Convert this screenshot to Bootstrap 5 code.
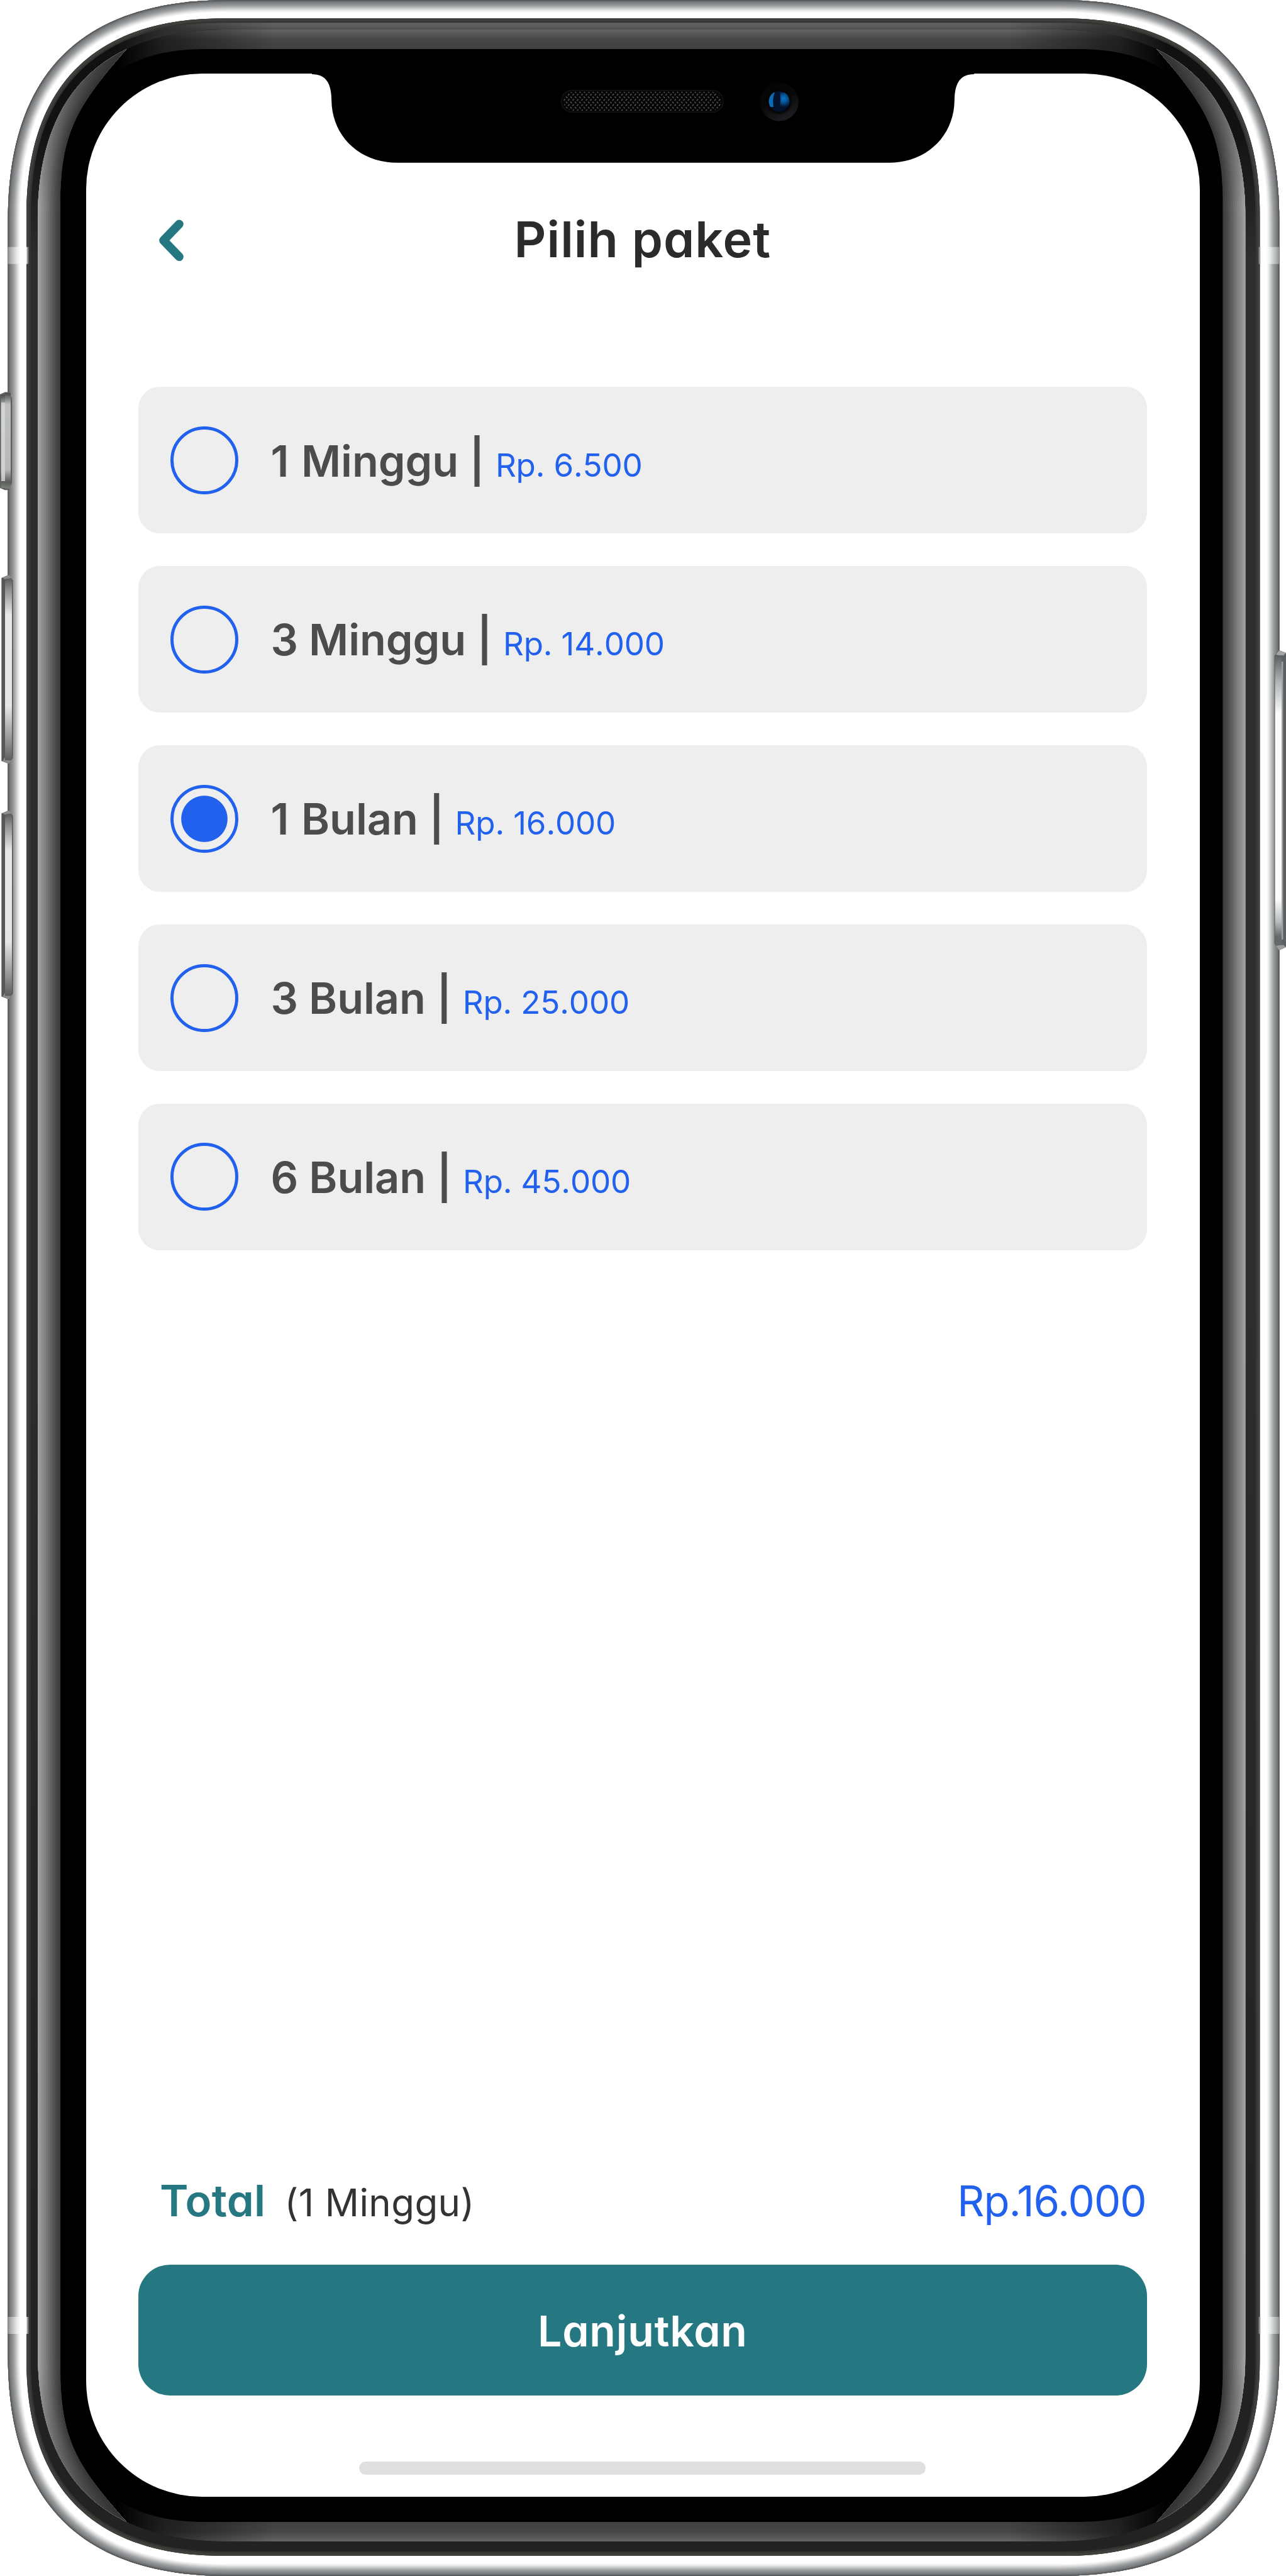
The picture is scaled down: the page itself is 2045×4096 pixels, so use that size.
<!DOCTYPE html>
<html lang="id">
<head>
<meta charset="utf-8">
<meta name="viewport" content="width=device-width, initial-scale=1">
<title>Pilih paket</title>
<link href="https://cdn.jsdelivr.net/npm/bootstrap@5.3.0/dist/css/bootstrap.min.css" rel="stylesheet">
<style>
  :root { --teal: #257881; --blue: #2161ee; --ink: #2b2b2b; }
  html, body { margin: 0; background: #fff; }
  body { width: 2045px; height: 4096px; overflow: hidden; font-family: Inter, "Open Sans", sans-serif; line-height: 1.2; }
  .phone { width: 2045px; height: 4096px; padding: 117px 136.6px 126.3px 136.6px; }
  .phone-art { inset: 0; width: 2045px; height: 4096px; }
  .phone-screen { border-radius: 184px; padding: 205px 84.7px 0 83.4px; }
  .geo { font-feature-settings: "cv11" 1, "ss03" 1; }
  .topbar { display: grid; grid-template-columns: 1fr auto 1fr; height: 120px; }
  .back-btn { width: 60px; height: 90px; margin-left: 25px; color: var(--teal); }
  .page-title { font-size: 79px; font-weight: 600; color: var(--ink); letter-spacing: 1px; line-height: 1; padding-bottom: 3px; }
  .plans { margin-top: 173.4px; gap: 51.9px; }
  .plan { height: 233px; border-radius: 34px; background: #eee; padding-left: 51.5px; gap: 51px; }
  .plan-radio { width: 108px; height: 108px; border: 5px solid var(--blue); border-radius: 50%; appearance: none; margin: 0; flex: none; background: transparent; }
  .plan-radio:checked { background: radial-gradient(circle, var(--blue) 36.3px, transparent 37.3px); }
  .plan-label { font-size: 68.5px; font-weight: 600; color: #4b4c4c; padding-top: 3.6px; white-space: pre; letter-spacing: -0.1px; font-kerning: none; }
  .plan-one { letter-spacing: 2.4px; }
  .plan-price { font-size: 51.2px; font-weight: 400; color: var(--blue); letter-spacing: -0.2px; }
  .summary { height: 96px; padding: 0 1px 0 34px; margin-bottom: 47px; }
  .sum-name { font-size: 69px; font-weight: 600; color: var(--teal); letter-spacing: .3px; }
  .sum-plan { font-size: 60px; font-weight: 400; color: #333; margin-left: 30px; letter-spacing: .4px; }
  .sum-price { font-size: 67px; font-weight: 400; color: var(--blue); letter-spacing: -0.9px; }
  .btn-next { height: 208px; border-radius: 50px; background: var(--teal); color: #fff; font-size: 68px; font-weight: 600; border: 0; letter-spacing: .7px; padding-top: 2px !important; }
  .home-bar { width: 901px; height: 21px; border-radius: 11px; background: #e0e0e0; margin: 105px auto 35px; }
</style>
</head>
<body>
<div class="phone position-relative">
  <svg class="phone-art position-absolute" viewBox="0 0 2045 4096" aria-hidden="true">
    <defs>
      <path id="shell" d="M12.6 350C12.6 117 129.6 0 362.6 0H1684.3C1917.3 0 2034.3 117 2034.3 350V3746C2034.3 3979 1917.3 4096 1684.3 4096H362.6C129.6 4096 12.6 3979 12.6 3746Z"/>
      <path id="body" d="M42 341.3C42 137.3 150 29.3 354 29.3H1691.4C1895.4 29.3 2003.4 137.3 2003.4 341.3V3752C2003.4 3956 1895.4 4064 1691.4 4064H354C150 4064 42 3956 42 3752Z"/>
      <path id="glass" d="M60 347C60 151 164 47 360 47H1680.5C1876.5 47 1980.5 151 1980.5 347V3741C1980.5 3937 1876.5 4041 1680.5 4041H360C164 4041 60 3937 60 3741Z"/>
      <clipPath id="cShell"><use href="#shell"/></clipPath>
      <clipPath id="cBody"><use href="#body"/></clipPath>
      <clipPath id="cGlass"><use href="#glass"/></clipPath>
      <clipPath id="cSide"><path d="M40 20H203V76C125 165 96.1 210 96.1 320V3768C96.1 3883 125 3923 203 4012V4070H40Z"/></clipPath>
      <clipPath id="cTop"><path d="M203 40V76L178 120C215 92 260 78 330 78H1710.5C1780.5 78 1825.5 92 1862.5 120L1837.5 76V40Z"/></clipPath>
      <linearGradient id="gBody" gradientUnits="userSpaceOnUse" x1="0" y1="0" x2="0" y2="4096">
        <stop offset="0" stop-color="#101010"/><stop offset=".05" stop-color="#121212"/><stop offset=".1" stop-color="#2d2d2d"/><stop offset=".5" stop-color="#2d2d2d"/><stop offset=".88" stop-color="#222"/><stop offset="1" stop-color="#222"/>
      </linearGradient>
      <linearGradient id="gSheen" gradientUnits="userSpaceOnUse" x1="0" y1="33" x2="0" y2="47">
        <stop offset="0" stop-color="#6a6a6a"/><stop offset="1" stop-color="#505050"/>
      </linearGradient>
      <linearGradient id="gFade" gradientUnits="userSpaceOnUse" x1="185" y1="0" x2="1855.5" y2="0">
        <stop offset="0" stop-color="#000"/><stop offset=".045" stop-color="#777"/><stop offset=".15" stop-color="#fff"/><stop offset=".85" stop-color="#fff"/><stop offset=".955" stop-color="#777"/><stop offset="1" stop-color="#000"/>
      </linearGradient>
      <mask id="mFade" maskUnits="userSpaceOnUse" x="0" y="0" width="2045" height="4096"><rect width="2045" height="4096" fill="url(#gFade)"/></mask>
      <linearGradient id="gTop" gradientUnits="userSpaceOnUse" x1="0" y1="47" x2="0" y2="78">
        <stop offset="0" stop-color="#646464"/><stop offset=".5" stop-color="#464646"/><stop offset="1" stop-color="#404040"/>
      </linearGradient>
      <linearGradient id="gDim" gradientUnits="userSpaceOnUse" x1="0" y1="0" x2="0" y2="4088">
        <stop offset=".018" stop-opacity=".72"/><stop offset=".04" stop-opacity=".4"/><stop offset=".08" stop-opacity="0"/><stop offset=".92" stop-opacity="0"/><stop offset=".96" stop-opacity=".4"/><stop offset=".982" stop-opacity=".72"/>
      </linearGradient>
      <linearGradient id="gBand" x1="0" x2="1" y1="0" y2="0">
        <stop offset="0" stop-color="#8f918f"/><stop offset=".15" stop-color="#b4b6b4"/><stop offset=".45" stop-color="#eceef1"/><stop offset=".6" stop-color="#fff"/><stop offset=".86" stop-color="#fff"/><stop offset=".9" stop-color="#a8a8a8"/><stop offset="1" stop-color="#3a3a38"/>
      </linearGradient>
      <linearGradient id="gKey" x1="0" x2="0" y1="0" y2="1">
        <stop offset="0" stop-color="#5c5e60"/><stop offset=".06" stop-color="#8d8f91"/><stop offset=".2" stop-color="#e8e8e8"/><stop offset=".7" stop-color="#e6e6e6"/><stop offset=".9" stop-color="#8d8f91"/><stop offset="1" stop-color="#5c5e60"/>
      </linearGradient>
      <linearGradient id="gPower" x1="0" x2="0" y1="0" y2="1">
        <stop offset="0" stop-color="#5c5e60"/><stop offset=".09" stop-color="#b0b2b4"/><stop offset=".2" stop-color="#fafafa"/><stop offset=".84" stop-color="#fdfdfd"/><stop offset=".92" stop-color="#b8babc"/><stop offset=".97" stop-color="#666869"/><stop offset="1" stop-color="#666869"/>
      </linearGradient>
      <linearGradient id="gMute" x1="0" x2="0" y1="0" y2="1">
        <stop offset="0" stop-color="#4a4c4a"/><stop offset=".12" stop-color="#bcbec0"/><stop offset=".8" stop-color="#b6b8ba"/><stop offset=".93" stop-color="#5a5c5a"/><stop offset="1" stop-color="#7c7e7c"/>
      </linearGradient>
      <g id="sideStrip">
        <g clip-path="url(#cSide)"><g clip-path="url(#cGlass)" fill="none">
          <use href="#glass" fill="#3c3c3c"/>
          <use href="#glass" stroke="#424242" stroke-width="68"/>
          <use href="#glass" stroke="#484848" stroke-width="62"/>
          <use href="#glass" stroke="#505050" stroke-width="56"/>
          <use href="#glass" stroke="#5a5a5a" stroke-width="50"/>
          <use href="#glass" stroke="#646464" stroke-width="44"/>
          <use href="#glass" stroke="#6e6e6e" stroke-width="38"/>
          <use href="#glass" stroke="#787878" stroke-width="32"/>
          <use href="#glass" stroke="#828282" stroke-width="26"/>
          <use href="#glass" stroke="#8a8a8a" stroke-width="20"/>
          <use href="#glass" stroke="#929292" stroke-width="14"/>
          <use href="#glass" stroke="#9a9a9a" stroke-width="9"/>
          <use href="#glass" stroke="#a2a2a2" stroke-width="4"/>
          <rect x="40" width="180" height="4096" fill="url(#gDim)"/>
        </g></g>
      </g>
      <g id="topStrip" mask="url(#mFade)">
        <g clip-path="url(#cTop)"><g clip-path="url(#cGlass)"><rect x="150" y="40" width="1740" height="90" fill="url(#gTop)"/></g></g>
      </g>
      <pattern id="mesh" width="7.05" height="8.3" patternUnits="userSpaceOnUse" x="892" y="144">
        <path d="M1 1.2L3 3.6M6.4 5.3L4.4 7.8" stroke="#747474" stroke-width="1.2" fill="none"/>
      </pattern>
      <linearGradient id="gRing" x1="0" y1="0" x2=".5" y2="1"><stop offset="0" stop-color="#030304"/><stop offset=".55" stop-color="#08080a"/><stop offset="1" stop-color="#1b1c1f"/></linearGradient>
      <radialGradient id="gHole" cx="1239" cy="161.5" r="22" gradientUnits="userSpaceOnUse"><stop offset=".7" stop-color="#000"/><stop offset="1" stop-color="#000" stop-opacity="0"/></radialGradient>
      <radialGradient id="gSpot" cx="1246" cy="157" r="13" gradientUnits="userSpaceOnUse"><stop offset="0" stop-color="#0a76cc"/><stop offset=".5" stop-color="#07508f"/><stop offset="1" stop-color="#021430"/></radialGradient>
      <clipPath id="cLens"><circle cx="1239" cy="161.2" r="16.5"/></clipPath>
    </defs>

    <!-- steel shell: nested strokes shade the rim from dark to bright -->
    <g clip-path="url(#cShell)">
      <use href="#shell" fill="#fff"/>
      <g fill="none">
        <use href="#shell" stroke="#f4f4f5" stroke-width="38"/>
        <use href="#shell" stroke="#e8e9e9" stroke-width="35"/>
        <use href="#shell" stroke="#dadbdb" stroke-width="32"/>
        <use href="#shell" stroke="#cacbcc" stroke-width="29"/>
        <use href="#shell" stroke="#babbbd" stroke-width="26"/>
        <use href="#shell" stroke="#abadae" stroke-width="23"/>
        <use href="#shell" stroke="#9c9ea0" stroke-width="20"/>
        <use href="#shell" stroke="#929496" stroke-width="17"/>
        <use href="#shell" stroke="#898b8d" stroke-width="14"/>
        <use href="#shell" stroke="#808284" stroke-width="11"/>
        <use href="#shell" stroke="#76787a" stroke-width="8"/>
        <use href="#shell" stroke="#67696b" stroke-width="5"/>
        <use href="#shell" stroke="#565859" stroke-width="2.4"/>
      </g>
    </g>
    <g clip-path="url(#cBody)">
      <use href="#body" fill="url(#gBody)"/>
      <g mask="url(#mFade)"><rect x="185" y="29" width="1670" height="50" fill="url(#gSheen)"/></g>
      <use href="#body" fill="none" stroke="#343432" stroke-width="14"/>
      <use href="#body" fill="none" stroke="#403f3c" stroke-width="8.5"/>
    </g>
    <use href="#glass" fill="#000"/>
    <use href="#sideStrip"/>
    <use href="#sideStrip" transform="matrix(-1 0 0 1 2040.5 0)"/>
    <use href="#topStrip"/>
    <use href="#topStrip" transform="matrix(1 0 0 -1 0 4088)"/>

    <!-- antenna bands -->
    <rect x="12.6" y="392.7" width="34" height="27" fill="url(#gBand)"/>
    <rect x="12.6" y="3684" width="34" height="27" fill="url(#gBand)"/>
    <g transform="matrix(-1 0 0 1 2046.9 0)">
      <rect x="12.6" y="392.7" width="34" height="27" fill="url(#gBand)"/>
      <rect x="12.6" y="3684" width="34" height="27" fill="url(#gBand)"/>
    </g>

    <!-- mute switch, volume keys, power key -->
    <path d="M0 627L8 623.6H14L19 634V768L14 779.3H8L0 776Z" fill="#5c5e5c"/>
    <path d="M1.5 628H8V776H1.5Z" fill="url(#gMute)"/><path d="M2 640H8V765H2Z" fill="#d8d8d8" opacity=".8"/>
    <path d="M8 625H17V777H8Z" fill="url(#gMute)"/>
    <g id="volume">
      <path d="M2.3 919L14 914L20.5 923V1205L14 1214.5L2.3 1210Z" fill="#555758"/>
      <path d="M4 918.5L14 914L19 919L8 921Z" fill="#8b8d8b"/>
      <path d="M4 1210L8 1204L18 1209L14 1214.5Z" fill="#8b8d8b"/>
      <path d="M8 925L10 920H18L19 926V1204L17 1209H8Z" fill="url(#gKey)"/>
    </g>
    <use href="#volume" y="374.5"/>
    <path d="M2034 1034L2045 1038V1506L2034 1511L2026.5 1500V1043Z" fill="#5d5f60"/>
    <path d="M2034 1034L2045 1038L2040 1043L2029 1041Z" fill="#a2a4a5"/>
    <path d="M2034 1511L2045 1506L2040 1502L2029 1504Z" fill="#9a9c9d"/>
    <path d="M2027.6 1042H2040L2038 1050V1495L2040 1503H2027.6Z" fill="url(#gPower)"/>
    <rect x="2038" y="1052" width="2.4" height="442" fill="#9fa1a2"/>
  </svg>

  <main class="phone-screen position-relative bg-white w-100 h-100 d-flex flex-column">
    <header class="topbar align-items-center">
      <a href="#" class="back-btn d-block" aria-label="Kembali">
        <svg width="60" height="90" viewBox="0 0 60 90" fill="none" stroke="currentColor" stroke-width="13.6" stroke-linecap="round" stroke-linejoin="round"><path d="M40 19.3L15 45.3L40 71.3"/></svg>
      </a>
      <h1 class="page-title geo m-0">Pilih paket</h1>
    </header>

    <section class="plans d-flex flex-column">
      <label class="plan d-flex align-items-center"><input class="plan-radio" type="radio" name="paket"><span class="plan-label"><span class="plan-one">1</span> Minggu | <span class="plan-price">Rp. 6.500</span></span></label>
      <label class="plan d-flex align-items-center"><input class="plan-radio" type="radio" name="paket"><span class="plan-label">3 Minggu | <span class="plan-price">Rp. 14.000</span></span></label>
      <label class="plan d-flex align-items-center"><input class="plan-radio" type="radio" name="paket" checked><span class="plan-label"><span class="plan-one">1</span> Bulan | <span class="plan-price">Rp. 16.000</span></span></label>
      <label class="plan d-flex align-items-center"><input class="plan-radio" type="radio" name="paket"><span class="plan-label">3 Bulan | <span class="plan-price">Rp. 25.000</span></span></label>
      <label class="plan d-flex align-items-center"><input class="plan-radio" type="radio" name="paket"><span class="plan-label">6 Bulan | <span class="plan-price">Rp. 45.000</span></span></label>
    </section>

    <footer class="mt-auto">
      <div class="summary geo d-flex align-items-baseline">
        <span class="sum-name">Total</span>
        <span class="sum-plan">(1 Minggu)</span>
        <span class="sum-price ms-auto">Rp.16.000</span>
      </div>
      <button type="button" class="btn btn-next geo w-100 p-0">Lanjutkan</button>
      <div class="home-bar"></div>
    </footer>
  </main>

  <!-- notch with speaker and camera -->
  <svg class="phone-art position-absolute pe-none" viewBox="0 0 2045 4096" aria-hidden="true">
    <path d="M496 116V118C518 118 527 132 527.2 160C528 215 570 258.8 632 258.8H1413C1475 258.8 1517 215 1517.8 160C1518 132 1527 118 1549 118V116Z"/>
    <rect x="892.7" y="143.8" width="257.5" height="34.4" rx="17.2" fill="#050505" stroke="#161616" stroke-width="1.4"/>
    <rect x="896" y="146" width="251" height="30" rx="15" fill="url(#mesh)"/>
    <circle cx="1239.1" cy="161.8" r="30.7" fill="url(#gRing)"/>
    <circle cx="1239" cy="161.5" r="22" fill="url(#gHole)"/>
    <g clip-path="url(#cLens)">
      <rect x="1222" y="144" width="34" height="35" fill="#02102c"/>
      <path d="M1222 147H1232C1229 154 1229 162 1230 170H1222Z" fill="#0a6ab4"/>
      <path d="M1240 147H1256V170H1240C1241.500 162 1241.500 154 1240 147Z" fill="url(#gSpot)"/>
    </g>
  </svg>
</div>
<script src="https://cdn.jsdelivr.net/npm/bootstrap@5.3.0/dist/js/bootstrap.bundle.min.js"></script>
</body>
</html>
